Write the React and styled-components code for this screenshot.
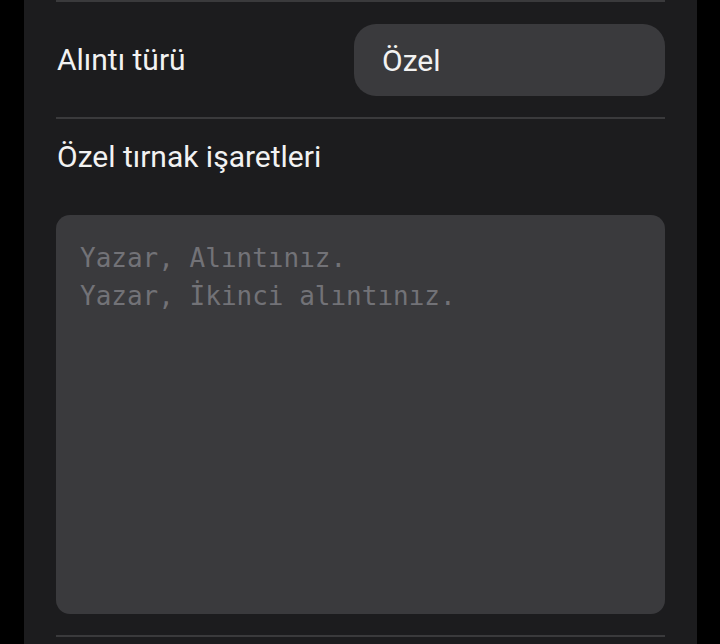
import React from "react";
import styled, { createGlobalStyle } from "styled-components";

const Global = createGlobalStyle`
  html, body { margin: 0; padding: 0; background: #000; height: 100%; overflow: hidden; }
  body { font-family: Roboto, "Noto Sans", sans-serif; }
`;

const Panel = styled.div`
  margin: 0 23px 0 24px;
  background: #1c1c1e;
  padding: 0 32px;
  min-height: 644px;
  box-sizing: border-box;
`;

const Divider = styled.div`
  height: 2px;
  background: #3a3a3c;
`;

const Row = styled.div`
  display: flex;
  align-items: center;
  justify-content: space-between;
  padding: 22px 0 21px;
`;

const Label = styled.div`
  color: #f2f2f2;
  font-size: 30px;
  line-height: 32px;
  padding-left: 1px;
`;

const Select = styled.div`
  width: 311px;
  height: 72px;
  box-sizing: border-box;
  border-radius: 22px;
  background: #3a3a3d;
  color: #f2f2f2;
  font-size: 30px;
  display: flex;
  align-items: center;
  padding-left: 28px;
`;

const Block = styled.div`
  display: flex;
  flex-direction: column;
  padding: 22px 0 21px;
`;

const BlockLabel = styled(Label)`
  margin-bottom: 42px;
`;

const TextArea = styled.textarea`
  height: 399px;
  box-sizing: border-box;
  border: none;
  outline: none;
  resize: none;
  border-radius: 14px;
  background: #3a3a3d;
  color: #f2f2f2;
  font-family: "DejaVu Sans Mono", "Liberation Mono", monospace;
  font-size: 26px;
  line-height: 38px;
  padding: 24px 24px 22px;
  &::placeholder { color: #727277; }
`;

export default function App() {
  return (
    <>
      <Global />
      <Panel>
        <Divider />
        <Row>
          <Label>Alıntı türü</Label>
          <Select>Özel</Select>
        </Row>
        <Divider />
        <Block>
          <BlockLabel>Özel tırnak işaretleri</BlockLabel>
          <TextArea placeholder={"Yazar, Alıntınız.\nYazar, İkinci alıntınız."} />
        </Block>
        <Divider />
      </Panel>
    </>
  );
}
